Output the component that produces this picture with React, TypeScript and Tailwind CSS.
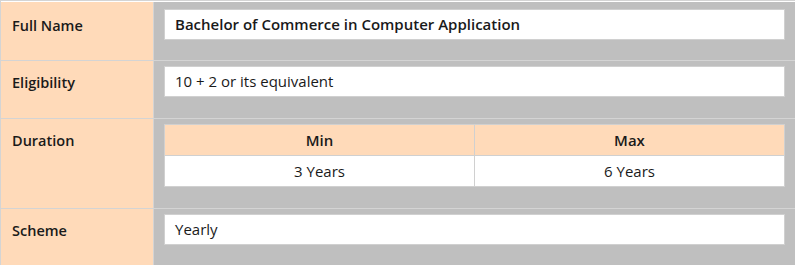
const rows: { label: string; value?: string; strong?: boolean }[] = [
  { label: "Full Name", value: "Bachelor of Commerce in Computer Application", strong: true },
  { label: "Eligibility", value: "10 + 2 or its equivalent" },
  { label: "Duration" },
  { label: "Scheme", value: "Yearly" },
];

function DurationTable() {
  return (
    <table className="w-full border-collapse text-center text-[15px] text-[#1a1a1a]">
      <thead>
        <tr className="bg-[#ffdab9]">
          <th className="h-[31px] w-1/2 border border-[#d0d0d0] font-semibold">Min</th>
          <th className="h-[31px] w-1/2 border border-[#d0d0d0] font-semibold">Max</th>
        </tr>
      </thead>
      <tbody>
        <tr className="bg-white">
          <td className="h-[31px] border border-[#d0d0d0]">3 Years</td>
          <td className="h-[31px] border border-[#d0d0d0]">6 Years</td>
        </tr>
      </tbody>
    </table>
  );
}

export default function App() {
  return (
    <div
      className="h-[265px] w-[795px] overflow-hidden border-l border-t border-[#d4d4d4] bg-[#bfbfbf]"
      style={{ fontFamily: '"Open Sans", "Noto Sans", sans-serif' }}
    >
      <div className="border-t border-white">
        {rows.map((row, i) => (
          <div key={row.label} className="flex border-b border-[#d4d4d4]">
            <div
              className={`w-[152px] shrink-0 bg-[#ffdab9] px-[11px] text-[14.5px] leading-[25px] font-semibold text-[#1a1a1a] ${
                i === 0 ? "pt-[11px]" : "pt-[9px]"
              }`}
            >
              {row.label}
            </div>
            <div
              className={`flex-1 border-l border-[#d4d4d4] pr-[10px] pl-[10px] ${
                i === 0 ? "pt-[7px] pb-[20px]" : "pt-[5px] pb-[21px]"
              }`}
            >
              {row.value ? (
                <div
                  className={`flex h-[31px] items-center border border-[#d0d0d0] bg-white px-[10px] text-[15px] text-[#1a1a1a] ${
                    row.strong ? "font-semibold" : "font-normal"
                  }`}
                >
                  {row.value}
                </div>
              ) : (
                <DurationTable />
              )}
            </div>
          </div>
        ))}
      </div>
    </div>
  );
}
